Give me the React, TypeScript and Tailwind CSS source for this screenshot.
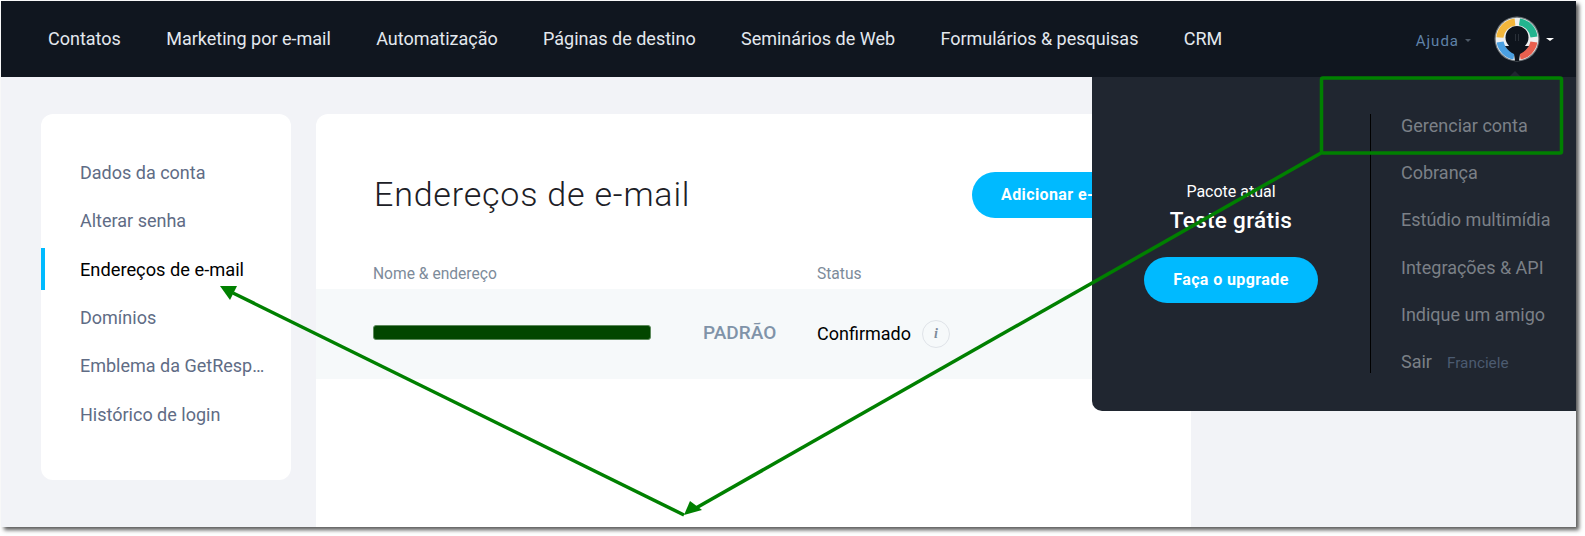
import React from "react";

const navItems = ["Contatos", "Marketing por e-mail", "Automatização", "Páginas de destino", "Seminários de Web", "Formulários & pesquisas", "CRM"];
const sideItems = ["Dados da conta", "Alterar senha", "Endereços de e-mail", "Domínios", "Emblema da GetResponse", "Histórico de login"];
const menuItems = ["Gerenciar conta", "Cobrança", "Estúdio multimídia", "Integrações & API", "Indique um amigo"];

function Avatar() {
  return (
    <svg width="46" height="46" viewBox="0 0 46 46">
      <circle cx="23" cy="23" r="22.5" fill="#6f7579" />
      <circle cx="23" cy="23" r="21.3" fill="#eef0f1" />
      <g fill="none" strokeWidth="7">
        <path d="M5.9 21.5 A17.2 17.2 0 0 1 21 5.9" stroke="#f3b73c" />
        <path d="M25.5 5.9 A17.2 17.2 0 0 1 40 21" stroke="#22b48f" />
        <path d="M39.9 26 A17.2 17.2 0 0 1 26 40" stroke="#e8604f" />
        <path d="M6.1 26 A17.2 17.2 0 0 0 20 40" stroke="#4a9fe0" />
      </g>
      <circle cx="23" cy="21.5" r="11.5" fill="#0e141c" />
      <path d="M11 30 L35 30 Q31 36 26 38 L25 45 L21 45 L20 38 Q15 36 11 30 Z" fill="#0e141c" />
      <path d="M21.5 18 V25 M24.5 18 V25" stroke="#2a3038" strokeWidth="1" />
    </svg>
  );
}

export default function App() {
  return (
    <div className="relative w-[1585px] h-[536px] bg-white overflow-hidden font-['Roboto',sans-serif]">
      <div className="relative ml-px mt-px w-[1575px] h-[526px] bg-[#f2f3f7] flex flex-col shadow-[3px_3px_4px_rgba(0,0,0,0.65)]">
        <header className="h-[76px] shrink-0 bg-[#10161f] flex items-center pl-[47px]">
          <nav className="flex gap-[45.3px] text-[#e3e8ee] text-[18px] -mt-[1px]">
            {navItems.map((n) => (
              <span key={n}>{n}</span>
            ))}
          </nav>
          <div className="ml-auto flex items-center">
            <span className="text-[15px] tracking-[1px] text-[#5f82a8] mt-[4px]">Ajuda</span>
            <span className="ml-[6px] mt-[2px] border-x-[3px] border-t-[3px] border-x-transparent border-t-[#4e5a68]" />
            <span className="ml-[23px] -mt-[1px] flex"><Avatar /></span>
            <span className="ml-[6px] mr-[22px] border-x-[4px] border-t-[3px] border-x-transparent border-t-white" />
          </div>
        </header>

        <div className="flex-1 flex gap-[25px] pl-[40px] pt-[37px] min-h-0">
          <aside className="w-[250px] h-[366px] bg-white rounded-[12px] pt-[34px] relative shrink-0">
            <ul className="flex flex-col">
              {sideItems.map((s, i) => (
                <li key={s} className={"relative h-[48.4px] pl-[39px] pr-[20px] flex items-center " + (i === 2 ? "text-black text-[18.25px]" : "text-[#606c85] text-[18px]")}>
                  {i === 2 && <span className="absolute left-0 top-[3px] w-[4px] h-[42px] bg-[#00baff]" />}
                  <span className={i === 2 ? "truncate mt-[1px]" : "truncate"}>{s}</span>
                </li>
              ))}
            </ul>
          </aside>

          <main className="w-[875px] bg-white rounded-t-[12px] shrink-0">
            <div className="flex items-center justify-between pl-[58px] pt-[58px] pr-[19px]">
              <h1 className="text-[34px] font-light tracking-[0.8px] text-[#1c2026] leading-[40px] -mt-[3px]">Endereços de e-mail</h1>
              <button className="h-[46px] w-[200px] rounded-full bg-[#00baff] text-white text-[16px] font-bold tracking-[0.4px] text-left pl-[29px]">Adicionar e-mail</button>
            </div>
            <div className="flex pl-[57px] mt-[46px] text-[15.6px] text-[#7d8b9a] leading-[20px]">
              <span className="w-[444px]">Nome & endereço</span>
              <span>Status</span>
            </div>
            <div className="h-[90px] mt-[5px] bg-[#f6f9fa] flex items-center pl-[57px] pb-[1px]">
              <span className="w-[278px] h-[15px] rounded-[3px] bg-[#024600] border border-[#5d8a5c] -mt-[3px]" />
              <span className="ml-[52px] w-[114px] text-[19px] font-medium text-[#8093a8]">PADRÃO</span>
              <span className="text-[18px] text-black">Confirmado</span>
              <span className="ml-[11px] w-[28px] h-[28px] rounded-full border border-[#dfe3e8] flex items-center justify-center text-[14px] italic font-bold text-[#7d8b9a] font-['Liberation_Serif',serif]">i</span>
            </div>
          </main>
        </div>

        <div className="absolute left-[1091px] top-[76px] w-[484px] h-[334px] bg-[#202630] rounded-bl-[10px] flex">
          <span className="absolute left-[417px] -top-[6px] border-x-[6px] border-b-[6px] border-x-transparent border-b-[#202630]" />
          <div className="w-[278px] flex flex-col items-center pt-[105px]">
            <span className="text-[16px] text-white leading-[20px]">Pacote atual</span>
            <span className="text-[22.5px] font-medium text-white leading-[28px] mt-[4px] tracking-[0.3px]">Teste grátis</span>
            <button className="mt-[23px] w-[174px] h-[46px] rounded-full bg-[#00baff] text-white text-[16px] font-bold tracking-[0.4px]">Faça o upgrade</button>
          </div>
          <div className="mt-[37px] h-[259px] border-l border-black pl-[30px] flex flex-col text-[18px] text-[#7b8087]">
            {menuItems.map((m) => (
              <span key={m} className="h-[47.2px] shrink-0 leading-[24px]">{m}</span>
            ))}
            <span className="flex items-baseline leading-[24px] shrink-0">
              Sair
              <span className="ml-[15px] text-[15.3px] text-[#4c5b70]">Franciele</span>
            </span>
          </div>
        </div>
      </div>

      <svg className="absolute left-0 top-0 pointer-events-none" width="1585" height="536" viewBox="0 0 1585 536">
        <rect x="1321.5" y="78" width="240" height="75" rx="1.5" fill="none" stroke="#008000" strokeWidth="3.5" />
        <path d="M1321 153 L696 508" stroke="#008000" strokeWidth="3.5" fill="none" />
        <path d="M684 515 L690 501 L702 510 Z" fill="#008000" />
        <path d="M684 515 L233 293" stroke="#008000" strokeWidth="3.5" fill="none" />
        <path d="M220 286 L237 286 L230 300 Z" fill="#008000" />
      </svg>
    </div>
  );
}
